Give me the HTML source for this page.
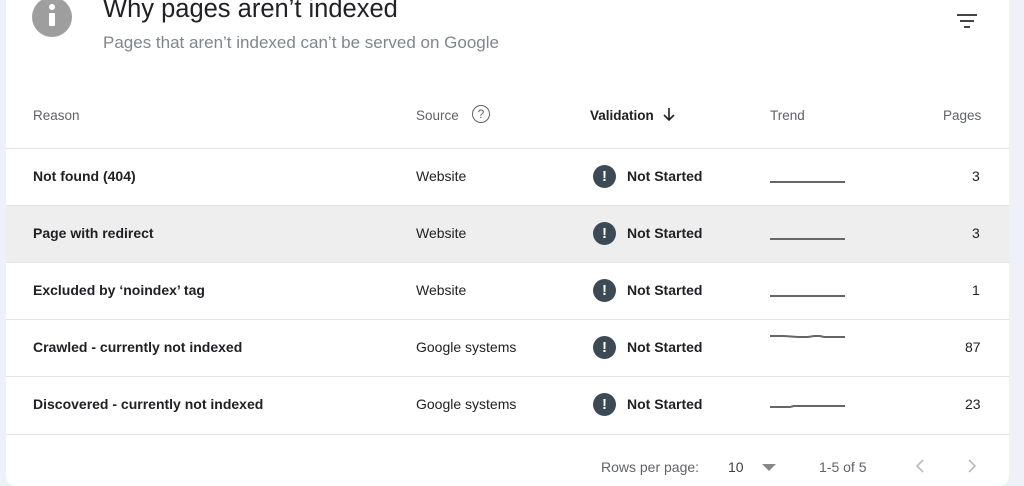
<!DOCTYPE html>
<html><head><style>
body{margin:0;width:1024px;height:486px;background:#eef2f8;font-family:"Liberation Sans",sans-serif;overflow:hidden;position:relative}
.card{position:absolute;left:6px;top:-10px;width:1003px;height:496px;background:#fff;border-radius:0 0 10px 10px}
.a{position:absolute}
.row{position:absolute;left:6px;width:1003px;height:57px;border-top:1px solid #e3e3e3}
.row span{position:absolute;top:19px;font-size:14px;color:#202124}
.r{font-weight:bold}
.ic{position:absolute;left:587px;top:16px;width:23px;height:23px;border-radius:50%;background:#3c4a56;color:#fff;font-weight:bold;text-align:center;line-height:23px;font-size:15px}
.h{position:absolute;top:108px;font-size:13.5px;color:#5f6368}
</style></head><body>
<div class="card"></div>
<div class="a" style="left:32px;top:-3px;width:40px;height:40px;background:#9e9e9e;border-radius:50%"></div>
<div class="a" style="left:49px;top:13px;width:6px;height:13px;background:#fff;border-radius:1px"></div>
<div class="a" style="left:49px;top:4px;width:6px;height:6px;background:#fff;border-radius:50%"></div>
<div class="a" style="left:103px;top:-5px;font-size:25.5px;color:#202124">Why pages aren’t indexed</div>
<div class="a" style="left:103px;top:33px;font-size:17px;color:#80868b">Pages that aren’t indexed can’t be served on Google</div>
<div class="a" style="left:957px;top:14px;width:20px;height:2px;background:#444"></div>
<div class="a" style="left:960px;top:20px;width:14px;height:2px;background:#444"></div>
<div class="a" style="left:964px;top:26px;width:6px;height:2px;background:#444"></div>
<div class="h" style="left:33px">Reason</div>
<div class="h" style="left:416px">Source</div>
<div class="a" style="left:472px;top:105px;width:16px;height:16px;border:1.5px solid #5f6368;border-radius:50%;font-size:12px;color:#5f6368;text-align:center;line-height:16px">?</div>
<div class="h" style="left:590px;color:#202124;font-weight:bold">Validation</div>
<svg class="a" style="left:662px;top:107px" width="14" height="16"><path d="M7 1V13M2 8L7 13L12 8" stroke="#202124" stroke-width="1.6" fill="none"/></svg>
<div class="h" style="left:770px">Trend</div>
<div class="h" style="left:943px">Pages</div>

<div class="row" style="top:148px"><span class="r" style="left:27px">Not found (404)</span><span style="left:410px">Website</span><div class="ic">!</div><span class="r" style="left:621px">Not Started</span><span style="left:764px;top:32px;width:75px;height:2px;background:#666"></span><span style="left:966px">3</span></div>
<div class="row" style="top:205px;background:#eeeeee"><span class="r" style="left:27px">Page with redirect</span><span style="left:410px">Website</span><div class="ic">!</div><span class="r" style="left:621px">Not Started</span><span style="left:764px;top:32px;width:75px;height:2px;background:#666"></span><span style="left:966px">3</span></div>
<div class="row" style="top:262px"><span class="r" style="left:27px">Excluded by ‘noindex’ tag</span><span style="left:410px">Website</span><div class="ic">!</div><span class="r" style="left:621px">Not Started</span><span style="left:764px;top:32px;width:75px;height:2px;background:#666"></span><span style="left:966px">1</span></div>
<div class="row" style="top:319px"><span class="r" style="left:27px">Crawled - currently not indexed</span><span style="left:410px">Google systems</span><div class="ic">!</div><span class="r" style="left:621px">Not Started</span><svg class="a" style="left:764px;top:12px" width="80" height="10"><path d="M0 4 L14 4 L28 5 L38 5 L44 4 L50 4 L54 5 L75 5" stroke="#666" stroke-width="2" fill="none"/></svg><span style="left:959px">87</span></div>
<div class="row" style="top:376px;height:57px;border-bottom:1px solid #e3e3e3"><span class="r" style="left:27px">Discovered - currently not indexed</span><span style="left:410px">Google systems</span><div class="ic">!</div><span class="r" style="left:621px">Not Started</span><svg class="a" style="left:764px;top:24px" width="80" height="10"><path d="M0 6 L20 6 L24 5 L75 5" stroke="#666" stroke-width="2" fill="none"/></svg><span style="left:959px">23</span></div>

<div class="a" style="left:601px;top:459px;font-size:14px;color:#5f6368">Rows per page:</div>
<div class="a" style="left:728px;top:459px;font-size:14px;color:#3c4043">10</div>
<div class="a" style="left:762px;top:464px;width:0;height:0;border-left:7px solid transparent;border-right:7px solid transparent;border-top:7px solid #888"></div>
<div class="a" style="left:819px;top:459px;font-size:14px;color:#5f6368">1-5 of 5</div>
<svg class="a" style="left:914px;top:458px" width="12" height="16"><path d="M9 2L3 8L9 14" stroke="#bbb" stroke-width="1.6" fill="none"/></svg>
<svg class="a" style="left:966px;top:458px" width="12" height="16"><path d="M3 2L9 8L3 14" stroke="#bbb" stroke-width="1.6" fill="none"/></svg>
</body></html>
